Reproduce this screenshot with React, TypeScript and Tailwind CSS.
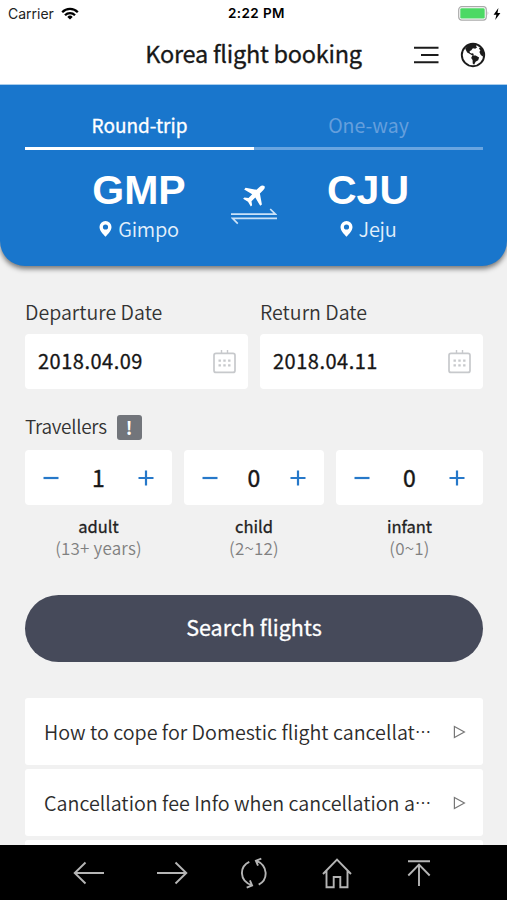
import type { ReactNode } from "react";

function StatusBar() {
  return (
    <div className="grid h-[27px] grid-cols-3 items-center px-2 font-['Inter','Roboto',sans-serif] text-black">
      <div className="flex items-center gap-[7px]">
        <span className="text-[14px] text-[#222]">Carrier</span>
        <svg width="18" height="13" viewBox="0 0 18 13" fill="none" stroke="#000" strokeWidth="2.3">
          <path d="M1.2 5.2a11 11 0 0 1 15.6 0M4 8.2a7 7 0 0 1 10 0" />
          <path d="M9 12.6 6.3 9.9a3.8 3.8 0 0 1 5.4 0Z" fill="#000" stroke="none" />
        </svg>
      </div>
      <div className="pl-[6px] text-center text-[13.5px] font-semibold tracking-[0.4px] whitespace-nowrap">2:22 PM</div>
      <div className="-mr-[2px] flex items-center justify-end gap-[3px]">
        <svg width="32" height="15" viewBox="0 0 32 15">
          <rect x="0.7" y="0.7" width="27.6" height="13.4" rx="3" fill="#fff" stroke="#aaa" strokeWidth="1.2" />
          <rect x="2.3" y="2.3" width="24.4" height="10.2" rx="1.3" fill="#4cd964" />
          <path d="M29.7 5.2q1.6 2.2 0 4.4Z" fill="#aaa" />
        </svg>
        <svg width="8" height="12" viewBox="0 0 8 12">
          <path d="M5.4 0 .6 6.8h2.8L2.2 12 7.4 5H4.5Z" fill="#000" />
        </svg>
      </div>
    </div>
  );
}

function GlobeIcon() {
  return (
    <svg width="26" height="26" viewBox="0 0 26 26">
      <circle cx="13" cy="13" r="11.2" fill="#fff" stroke="#1b1b1b" strokeWidth="1.9" />
      <path d="M5.2 6.4 8.2 3 12 1.8h5l-1 2.4 1.2 1-2 1.6-2.3-.6-1.8 2.2-1.5.6.3 1.8 1.6.6 1.6-.2.9 2.2h-1.6l-2.4-1.4-2.8-1.6-1.2-2.2Z" fill="#1b1b1b" />
      <path d="M12.3 13.6h3.4l3.4 1.9-.9 2.8-2.6 1.5-1.5 2.9-1.4-1.1-.1-3.7-1.4-2Z" fill="#1b1b1b" />
      <path d="m20.2 5.2 2.7 3 1 4.1-.7 2.4-2.4-1.6-1.4-3.2 1-1.7-1.5-1.4Z" fill="#1b1b1b" />
    </svg>
  );
}

function Header() {
  return (
    <header className="grid h-[58px] grid-cols-[1fr_auto_1fr] items-center border-b border-[#a9cdec] pb-[2px]">
      <span />
      <h1 className="pb-px text-[23.5px] tracking-[-0.25px] whitespace-nowrap text-[#181818] [-webkit-text-stroke:0.3px_#181818]">Korea flight booking</h1>
      <div className="flex items-center justify-end gap-[21px] pr-[21px]">
        <svg width="26" height="20" viewBox="0 0 26 20" stroke="#1b1b1b" strokeWidth="2.1">
          <path d="M1 2.7h24.5M8 10h17.5M1 17.3h24.5" />
        </svg>
        <GlobeIcon />
      </div>
    </header>
  );
}

function Airport({ code, city }: { code: string; city: string }) {
  return (
    <div className="flex w-[228px] flex-col items-center text-white">
      <div className="font-['Liberation_Sans',sans-serif] text-[41px] leading-[44px] font-bold">{code}</div>
      <div className="mt-[2px] flex h-[30px] items-center gap-[6px] text-[20px] font-[350] text-[#e3f0fb]">
        <svg width="13" height="16" viewBox="0 0 13 16">
          <path fillRule="evenodd" d="M6.5 0A6 6 0 0 1 12.5 6C12.5 9.6 9 13 6.5 15.8 4 13 .5 9.6.5 6A6 6 0 0 1 6.5 0Zm0 3.4a2.6 2.6 0 1 0 0 5.2 2.6 2.6 0 0 0 0-5.2Z" fill="#fff" />
        </svg>
        <span className="tracking-[-0.3px]">{city}</span>
      </div>
    </div>
  );
}

function RouteCard() {
  return (
    <section className="h-[181px] rounded-b-[25px] bg-[#1976cc] pt-[21px] pr-[24px] pl-[25px] shadow-[0_3px_5px_rgba(0,0,0,0.5)]">
      <div className="grid grid-cols-[229px_229px] text-center text-[19px] leading-[38px]">
        <div className="h-[44px] border-b-[3px] border-white text-white [-webkit-text-stroke:0.3px_#fff]">Round-trip</div>
        <div className="h-[44px] border-b-[3px] border-[#69a5e0] text-[19.5px] text-[#659fdc]">One-way</div>
      </div>
      <div className="flex justify-between pt-[18px] pr-px">
        <Airport code="GMP" city="Gimpo" />
        <svg className="-mx-6 mt-[16px] shrink-0" width="46" height="42" viewBox="0 0 46 42" fill="none">
          <path d="M33.3 2.1c1 1 .3 2.7-.9 3.9l-3.5 3.6 2 10.9-1.7 1.3-4.9-8.2-3.8 3.6.6 4.1-1.3 1.2-2.8-4.8-4.9-2.9 1.3-1.3 4.1.6 3.7-3.8-8-4.8 1.4-1.7 10.9 2 3.6-3.3c1.3-1.3 3.2-1.4 4.2-.4Z" fill="#fff" />
          <path d="M0 30.2h44.4L39.2 25M46 34.4H1.6l5.2 5.2" stroke="#cbe2f7" strokeWidth="1.7" />
        </svg>
        <Airport code="CJU" city="Jeju" />
      </div>
    </section>
  );
}

function CalendarIcon() {
  return (
    <svg width="23" height="24" viewBox="0 0 23 24" fill="none" stroke="#c7c9cc">
      <rect x="1" y="3.4" width="21" height="19" rx="2" strokeWidth="1.7" />
      <path d="M8.5 0v3M14.5 0v3" strokeWidth="1.4" />
      <path d="M5.5 10.7h2.4M10.3 10.7h2.4M15.1 10.7h2.4M5.5 15.4h2.4M10.3 15.4h2.4M15.1 15.4h2.4" strokeWidth="2.3" />
    </svg>
  );
}

function DateField({ label, value }: { label: string; value: string }) {
  return (
    <div>
      <div className="h-[34px] text-[19.6px] leading-[34px] font-[350] text-[#333]">{label}</div>
      <div className="mt-[5px] flex h-[55px] items-center justify-between rounded-[4px] bg-white pr-3 pl-[13px]">
        <span className="pb-px text-[20px] tracking-[0.5px] text-[#161616] [-webkit-text-stroke:0.3px_#161616]">{value}</span>
        <CalendarIcon />
      </div>
    </div>
  );
}

function Stepper({ count, label, note }: { count: number; label: string; note: string }) {
  return (
    <div className="text-center">
      <div className="flex h-[55px] items-center justify-between rounded-[4px] bg-white px-[18px]">
        <svg width="16" height="16" viewBox="0 0 16 16" stroke="#2678c9" strokeWidth="2.2"><path d="M.5 8h15" /></svg>
        <span className="text-[23px] text-[#161616] [-webkit-text-stroke:0.4px_#161616]">{count}</span>
        <svg width="16" height="16" viewBox="0 0 16 16" stroke="#2678c9" strokeWidth="2.2"><path d="M.5 8h15M8 .5v15" /></svg>
      </div>
      <p className="pt-[10px] text-[17px] leading-[22px] font-[350] text-[#808080]">
        <b className="text-[16.5px] font-normal text-[#222] [-webkit-text-stroke:0.3px_#222]">{label}</b>
        <br />
        <span className="tracking-[0.2px]">{note}</span>
      </p>
    </div>
  );
}

function InfoRow({ text }: { text: string }) {
  return (
    <div className="flex h-[67px] shrink-0 items-center justify-between rounded-[3px] bg-white pr-[17px] pl-[19px]">
      <span className="pt-px text-[19.7px] font-[350] whitespace-nowrap text-[#2c2c2c]">
        {text}
        <span className="inline-block -translate-y-[2px] text-[16px] leading-none">…</span>
      </span>
      <svg width="13" height="14" viewBox="0 0 13 14" fill="none" stroke="#777" strokeWidth="1.2">
        <path d="M1.4 1.5v11L11.4 7Z" />
      </svg>
    </div>
  );
}

function NavIcon({ children }: { children: ReactNode }) {
  return (
    <svg width="32" height="32" viewBox="0 0 32 32" fill="none" stroke="#b5b5b5" strokeWidth="1.9">
      {children}
    </svg>
  );
}

function BottomNav() {
  return (
    <nav className="flex h-[55px] shrink-0 items-center justify-between bg-black pr-[72px] pl-[73px]">
      <NavIcon><path d="M31 16H1.5M12.5 5.5 1.7 16l10.8 10.5" /></NavIcon>
      <NavIcon><path d="M1 16h29.5M19.5 5.5 30.3 16 19.5 26.5" /></NavIcon>
      <NavIcon><path d="M11.3 4.8C1.5 9.5.7 23.5 13.8 28.3M8.7 30.6l5.4-2.2-2.2-5M20.7 27.7c9.8-5.4 9.4-19-2.4-24.1M23.3 1.7l-5.4 2 2.1 5" /></NavIcon>
      <NavIcon><path d="M2 17 16 2.7 30 17M5.5 14v16.3h7.2V20h6.6v10.3h7.2V14" /></NavIcon>
      <NavIcon><path d="M5 4.3h22M16 29V7.5M5.3 18.5 16 7.7l10.7 10.8" /></NavIcon>
    </nav>
  );
}

export default function App() {
  return (
    <div className="flex h-[900px] w-[507px] flex-col overflow-hidden bg-[#f1f1f1] font-['Noto_Sans_CJK_KR','Noto_Sans',sans-serif]">
      <div className="shrink-0 bg-white">
        <StatusBar />
        <Header />
      </div>
      <div className="min-h-0 flex-1 overflow-hidden">
        <RouteCard />
        <main className="pr-[24px] pl-[25px]">
          <div className="grid grid-cols-[223px_223px] gap-3 pt-[29px]">
            <DateField label="Departure Date" value="2018.04.09" />
            <DateField label="Return Date" value="2018.04.11" />
          </div>
          <div className="mt-[21px] flex h-[34px] items-center gap-[10px]">
            <span className="pb-px text-[19px] font-[350] tracking-[-0.3px] text-[#333]">Travellers</span>
            <span className="flex h-[25px] w-[25px] items-center justify-center rounded-[3px] bg-[#72757b] text-[18px] font-bold text-white">!</span>
          </div>
          <div className="mt-[6px] grid grid-cols-[147px_140px_147px] gap-3">
            <Stepper count={1} label="adult" note="(13+ years)" />
            <Stepper count={0} label="child" note="(2~12)" />
            <Stepper count={0} label="infant" note="(0~1)" />
          </div>
          <button className="mt-[36px] block h-[67px] w-full rounded-full bg-[#464a5a] pb-[2px] text-[21.5px] text-white [-webkit-text-stroke:0.3px_#fff]">Search flights</button>
          <div className="mt-[36px] flex flex-col gap-1">
            <InfoRow text="How to cope for Domestic flight cancellat" />
            <InfoRow text="Cancellation fee Info when cancellation a" />
            <div className="h-[67px] shrink-0 rounded-[3px] bg-white" />
          </div>
        </main>
      </div>
      <BottomNav />
    </div>
  );
}
